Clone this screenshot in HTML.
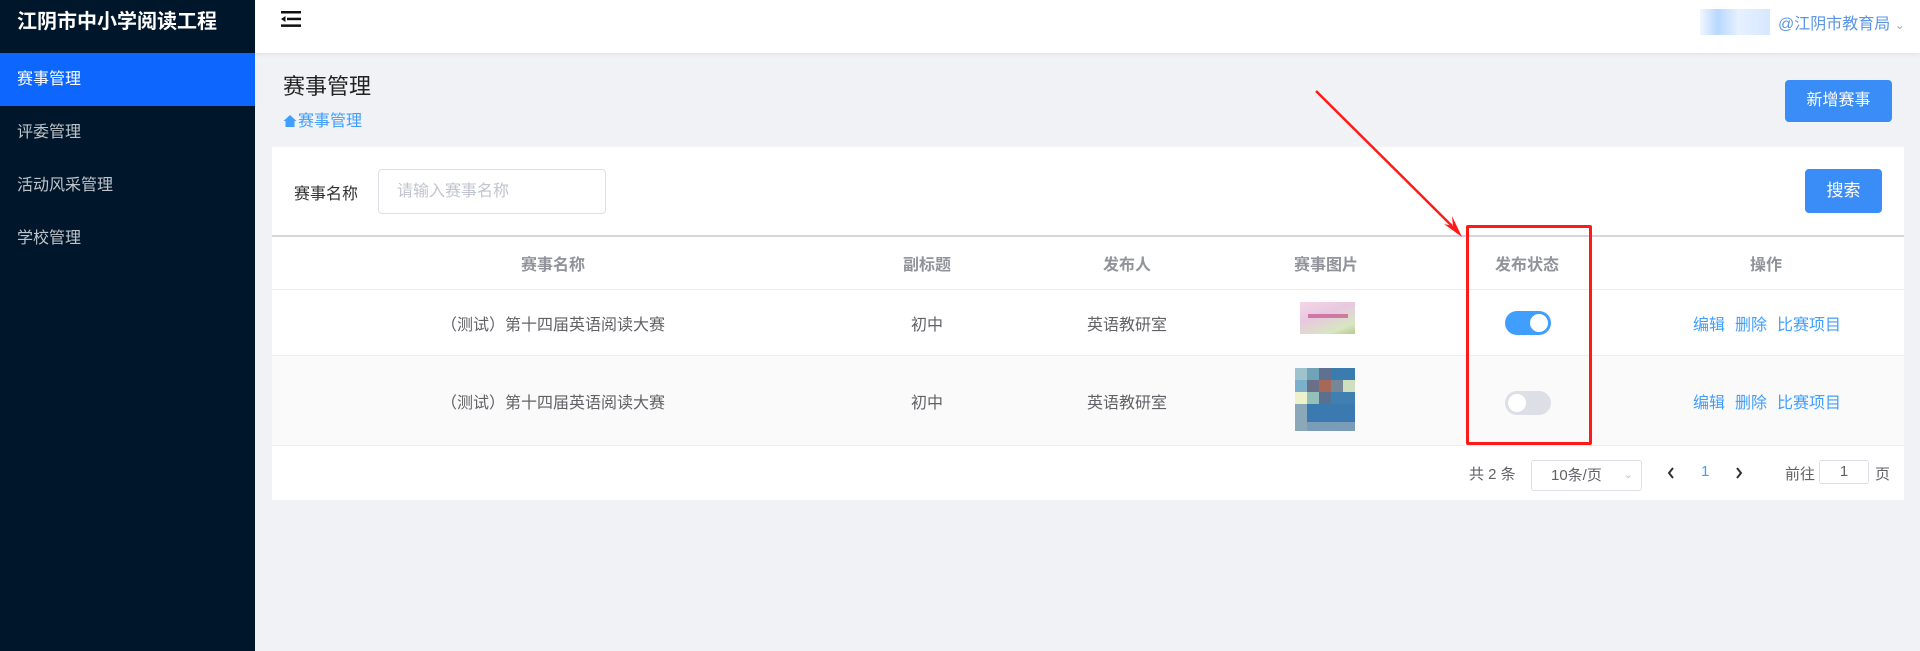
<!DOCTYPE html>
<html><head><meta charset="utf-8"><style>
*{margin:0;padding:0;box-sizing:border-box}
body{width:1920px;height:651px;overflow:hidden;background:#f0f2f5;font-family:"Liberation Sans","Noto Sans CJK SC",sans-serif;position:relative}
.abs{position:absolute}
.side{left:0;top:0;width:255px;height:651px;background:#00172b}
.side .t{position:absolute;left:17px;top:9px;color:#fff;font-size:20px;font-weight:bold;line-height:26px}
.mi{position:absolute;left:0;width:255px;height:53px;line-height:53px;padding-left:17px;color:#bfc4ca;font-size:16px}
.mi.act{background:#0d66fd;color:#fff}
.hdr{left:255px;top:0;width:1665px;height:53px;background:#fff;box-shadow:0 1px 4px rgba(0,21,41,.08)}
.card{left:272px;top:147px;width:1632px;height:353px;background:#fff}
.th,.td{position:absolute;text-align:center;font-size:16px;transform:translateX(-50%);white-space:nowrap}
.th{color:#909399;font-weight:bold;top:251px}
.td{color:#606266}
.btn{position:absolute;background:#3a8cf6;color:#fff;border-radius:4px;font-size:16px;text-align:center}
.op{position:absolute;color:#409eff;font-size:16px}
.sw{position:absolute;width:46px;height:24px;border-radius:12px}
.sw i{position:absolute;top:3px;width:18px;height:18px;border-radius:50%;background:#fff}
.pg{position:absolute;font-size:15px;color:#606266}
</style></head><body>
<div class="abs side">
<div class="t">江阴市中小学阅读工程</div>
<div class="mi act" style="top:53px">赛事管理</div>
<div class="mi" style="top:106px">评委管理</div>
<div class="mi" style="top:159px">活动风采管理</div>
<div class="mi" style="top:212px">学校管理</div>
</div>
<div class="abs hdr"></div>
<svg class="abs" style="left:281px;top:11px" width="20" height="16" viewBox="0 0 20 16"><rect x="0" y="0" width="20" height="2.5" fill="#111"/><rect x="6" y="6.7" width="14" height="2.5" fill="#111"/><rect x="0" y="13.4" width="20" height="2.5" fill="#111"/><path d="M0 8 L4.5 5 L4.5 11 Z" fill="#111"/></svg>
<div class="abs" style="left:1700px;top:9px;width:70px;height:26px;background:linear-gradient(90deg,#f2f7ff,#b8d8ff 25%,#e6f0ff 55%,#d6e8ff)"></div>
<div class="abs" style="left:1778px;top:10px;font-size:16px;color:#5b95e6">@江阴市教育局 <span style="font-size:12px;color:#9ab">&#8964;</span></div>
<div class="abs" style="left:283px;top:69px;font-size:22px;color:#222">赛事管理</div>
<div class="abs" style="left:283px;top:107px;font-size:16px;color:#409eff"><svg width="14" height="12" viewBox="0 0 13 12" style="vertical-align:-1px;margin-right:1px"><path d="M6.5 0 L13 6 L11 6 L11 12 L2 12 L2 6 L0 6 Z" fill="#409eff"/></svg>赛事管理</div>
<div class="btn" style="left:1785px;top:80px;width:107px;height:42px;line-height:42px">新增赛事</div>
<div class="abs card"></div>
<div class="abs" style="left:294px;top:180px;font-size:16px;color:#303133">赛事名称</div>
<div class="abs" style="left:378px;top:169px;width:228px;height:45px;border:1px solid #dcdfe6;border-radius:4px;padding-left:18px;line-height:43px;font-size:16px;color:#c0c4cc">请输入赛事名称</div>
<div class="btn" style="left:1805px;top:169px;width:77px;height:44px;line-height:44px;font-size:17px">搜索</div>
<div class="abs" style="left:272px;top:235px;width:1632px;height:2px;background:#d4d6da"></div>
<div class="th" style="left:553px">赛事名称</div>
<div class="th" style="left:927px">副标题</div>
<div class="th" style="left:1127px">发布人</div>
<div class="th" style="left:1326px">赛事图片</div>
<div class="th" style="left:1527px">发布状态</div>
<div class="th" style="left:1766px">操作</div>
<div class="abs" style="left:272px;top:289px;width:1632px;height:1px;background:#ebeef5"></div>
<div class="abs" style="left:272px;top:355px;width:1632px;height:91px;background:#fafafa;border-top:1px solid #ebeef5;border-bottom:1px solid #ebeef5"></div>
<div class="td" style="left:553px;top:311px">（测试）第十四届英语阅读大赛</div>
<div class="td" style="left:927px;top:311px">初中</div>
<div class="td" style="left:1127px;top:311px">英语教研室</div>
<div class="abs" style="left:1300px;top:302px;width:55px;height:32px;background:linear-gradient(160deg,#f4d6e6,#e8c8e0 40%,#d7e6c0 80%,#b8c890)"><div style="position:absolute;left:8px;top:12px;width:40px;height:4px;background:#c04080;opacity:.6"></div></div>
<div class="sw" style="left:1505px;top:311px;background:#409eff"><i style="left:25px"></i></div>
<div class="op" style="left:1693px;top:311px">编辑</div><div class="op" style="left:1735px;top:311px">删除</div><div class="op" style="left:1777px;top:311px">比赛项目</div>
<div class="td" style="left:553px;top:389px">（测试）第十四届英语阅读大赛</div>
<div class="td" style="left:927px;top:389px">初中</div>
<div class="td" style="left:1127px;top:389px">英语教研室</div>
<svg class="abs" style="left:1295px;top:368px" width="60" height="63" viewBox="0 0 60 63">
<rect x="0" y="0" width="12" height="12" fill="#9ec3cc"/><rect x="12" y="0" width="12" height="12" fill="#6fa4b8"/><rect x="24" y="0" width="12" height="12" fill="#607090"/><rect x="36" y="0" width="24" height="12" fill="#3a7cae"/>
<rect x="0" y="12" width="12" height="12" fill="#7ab0cc"/><rect x="12" y="12" width="12" height="12" fill="#6a7088"/><rect x="24" y="12" width="12" height="12" fill="#a86858"/><rect x="36" y="12" width="12" height="12" fill="#768898"/><rect x="48" y="12" width="12" height="12" fill="#cfe0c0"/>
<rect x="0" y="24" width="12" height="12" fill="#eef2cc"/><rect x="12" y="24" width="12" height="12" fill="#94c0b8"/><rect x="24" y="24" width="12" height="12" fill="#5a7090"/><rect x="36" y="24" width="24" height="12" fill="#4080b0"/>
<rect x="0" y="36" width="12" height="27" fill="#8aa8b8"/><rect x="12" y="36" width="48" height="18" fill="#3a7ab0"/><rect x="12" y="54" width="48" height="9" fill="#7a9cb8"/></svg>
<div class="sw" style="left:1505px;top:391px;background:#dcdfe6"><i style="left:3px"></i></div>
<div class="op" style="left:1693px;top:389px">编辑</div><div class="op" style="left:1735px;top:389px">删除</div><div class="op" style="left:1777px;top:389px">比赛项目</div>
<div class="pg" style="left:1469px;top:463px">共 2 条</div>
<div class="abs" style="left:1531px;top:460px;width:111px;height:31px;border:1px solid #dcdfe6;border-radius:3px;font-size:15px;color:#606266;line-height:29px;padding-left:19px">10条/页<span style="position:absolute;right:8px;color:#c0c4cc;font-size:11px">&#8964;</span></div>
<svg class="abs" style="left:1666px;top:466px" width="10" height="14" viewBox="0 0 10 14"><path d="M7 2 L3 7 L7 12" stroke="#303133" stroke-width="2" fill="none"/></svg>
<div class="pg" style="left:1701px;top:463px;color:#409eff">1</div>
<svg class="abs" style="left:1734px;top:466px" width="10" height="14" viewBox="0 0 10 14"><path d="M3 2 L7 7 L3 12" stroke="#303133" stroke-width="2" fill="none"/></svg>
<div class="pg" style="left:1785px;top:463px">前往</div>
<div class="abs" style="left:1819px;top:460px;width:50px;height:24px;border:1px solid #dcdfe6;border-radius:3px;text-align:center;font-size:15px;color:#606266;line-height:22px">1</div>
<div class="pg" style="left:1875px;top:463px">页</div>
<div class="abs" style="left:1466px;top:225px;width:126px;height:220px;border:3px solid #ff1a1a;border-radius:2px"></div>
<svg class="abs" style="left:0;top:0" width="1920" height="651"><line x1="1316" y1="91" x2="1452" y2="226" stroke="#ff1a1a" stroke-width="2.5"/><path d="M1462 237 L1444 224 L1453 226 L1452 216 Z" fill="#ff1a1a"/></svg>
</body></html>
